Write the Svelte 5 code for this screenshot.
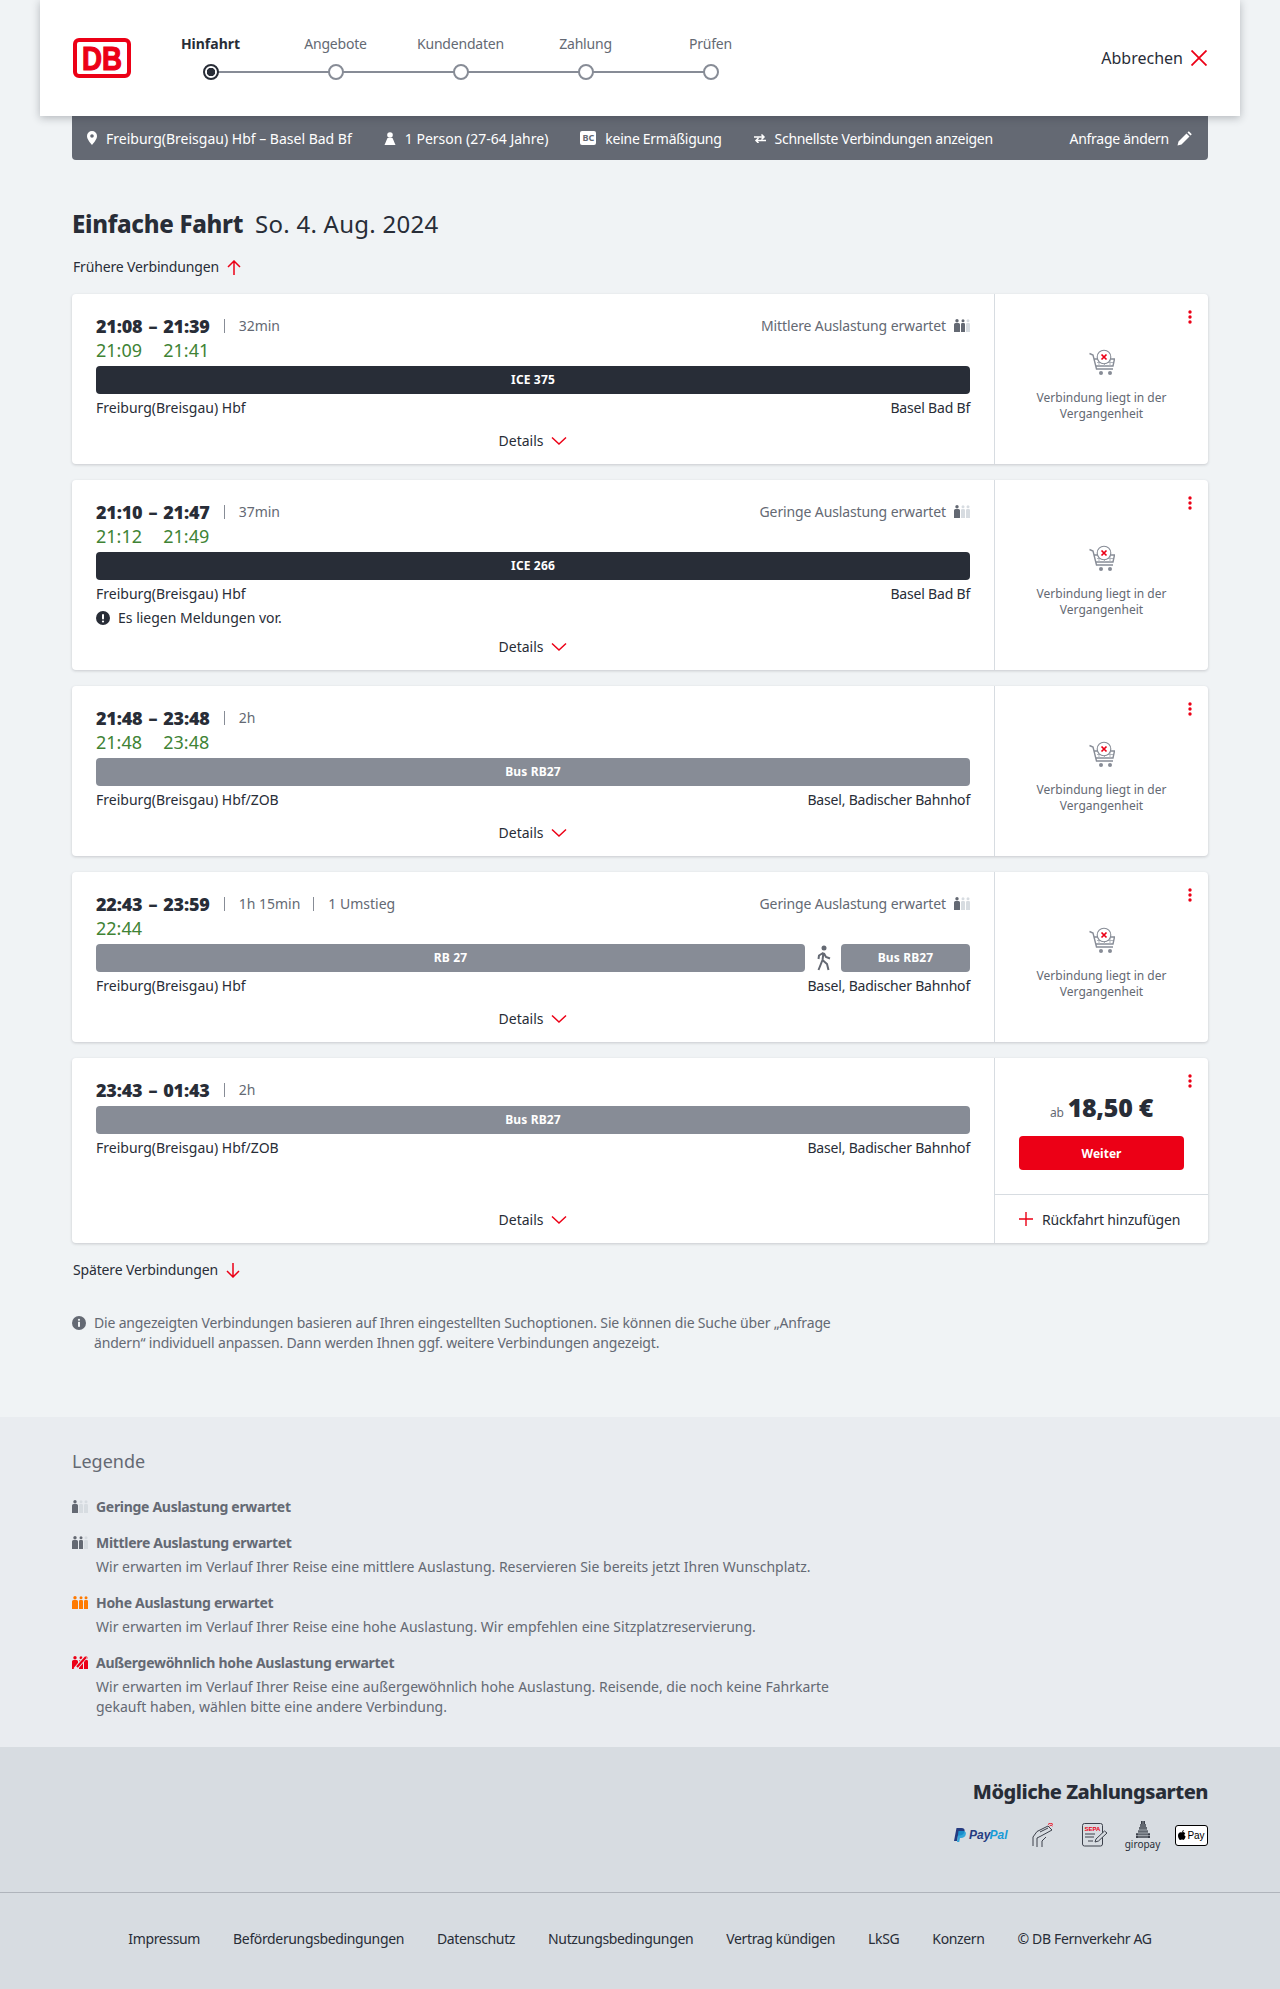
<script>
	let steps = ["Hinfahrt", "Angebote", "Kundendaten", "Zahlung", "Prüfen"];

	let trips = [
		{dep: "21:08", arr: "21:39", depReal: "21:09", arrReal: "21:41", meta: ["32min"], load: "Mittlere Auslastung erwartet", level: 2,
			bars: [{name: "ICE 375", dark: true}], from: "Freiburg(Breisgau) Hbf", to: "Basel Bad Bf"},
		{dep: "21:10", arr: "21:47", depReal: "21:12", arrReal: "21:49", meta: ["37min"], load: "Geringe Auslastung erwartet", level: 1,
			bars: [{name: "ICE 266", dark: true}], from: "Freiburg(Breisgau) Hbf", to: "Basel Bad Bf", notice: "Es liegen Meldungen vor."},
		{dep: "21:48", arr: "23:48", depReal: "21:48", arrReal: "23:48", meta: ["2h"],
			bars: [{name: "Bus RB27"}], from: "Freiburg(Breisgau) Hbf/ZOB", to: "Basel, Badischer Bahnhof"},
		{dep: "22:43", arr: "23:59", depReal: "22:44", meta: ["1h 15min", "1 Umstieg"], load: "Geringe Auslastung erwartet", level: 1,
			bars: [{name: "RB 27", grow: true}, {walk: true}, {name: "Bus RB27"}], from: "Freiburg(Breisgau) Hbf", to: "Basel, Badischer Bahnhof"},
		{dep: "23:43", arr: "01:43", meta: ["2h"],
			bars: [{name: "Bus RB27"}], from: "Freiburg(Breisgau) Hbf/ZOB", to: "Basel, Badischer Bahnhof", price: "18,50 €"},
	];

	let legend = [
		{title: "Geringe Auslastung erwartet", level: 1, text: []},
		{title: "Mittlere Auslastung erwartet", level: 2, text: ["Wir erwarten im Verlauf Ihrer Reise eine mittlere Auslastung. Reservieren Sie bereits jetzt Ihren Wunschplatz."]},
		{title: "Hohe Auslastung erwartet", level: 3, text: ["Wir erwarten im Verlauf Ihrer Reise eine hohe Auslastung. Wir empfehlen eine Sitzplatzreservierung."]},
		{title: "Außergewöhnlich hohe Auslastung erwartet", level: 4, text: ["Wir erwarten im Verlauf Ihrer Reise eine außergewöhnlich hohe Auslastung. Reisende, die noch keine Fahrkarte", "gekauft haben, wählen bitte eine andere Verbindung."]},
	];

	let footerLinks = ["Impressum", "Beförderungsbedingungen", "Datenschutz", "Nutzungsbedingungen", "Vertrag kündigen", "LkSG", "Konzern", "© DB Fernverkehr AG"];
</script>

{#snippet occupancy(level)}
	{@const on = level === 3 ? "#ff7a00" : level === 4 ? "#ec0016" : "#646973"}
	{@const off = "#d7dce1"}
	<svg class="occ" width="16" height="13" viewBox="0 0 16 13">
		<circle cx="3" cy="1.700" r="1.700" fill={on} />
		<path d="M0 5.500a1.500 1.500 0 0 1 1.500-1.500h3A1.500 1.500 0 0 1 6 5.500V12.500a.5.5 0 0 1-.5.5H0z" fill={on} />
		<circle cx="9" cy="1.700" r="1.500" fill={level >= 2 ? on : off} />
		<path d="M7 5.200a1.200 1.200 0 0 1 1.200-1.200h1.600a1.200 1.200 0 0 1 1.200 1.200V13H7z" fill={level >= 2 ? on : off} />
		<circle cx="14" cy="1.700" r="1.500" fill={level >= 3 ? on : off} />
		<path d="M12 5.200a1.200 1.200 0 0 1 1.200-1.200h1.600a1.200 1.200 0 0 1 1.200 1.200V13h-4z" fill={level >= 3 ? on : off} />
		{#if level === 4}
			<path d="M3 13.500 14 0.500" stroke="#e9ecf0" stroke-width="4" />
			<path d="M5 11 14 1" stroke={on} stroke-width="2.200" />
		{/if}
	</svg>
{/snippet}

{#snippet dots()}
	<svg class="dots" width="4" height="14" viewBox="0 0 4 14">
		<circle cx="2" cy="2" r="1.700" /><circle cx="2" cy="7" r="1.700" /><circle cx="2" cy="12" r="1.700" />
	</svg>
{/snippet}

{#snippet chevron()}
	<svg width="16" height="10" viewBox="0 0 16 10" fill="none" stroke="#ec0016" stroke-width="1.500"><path d="M1 1.500 8 8 15 1.500" /></svg>
{/snippet}

<div class="page">
	<header class="top">
		<svg class="logo" width="58" height="40" viewBox="0 0 58 40">
			<rect x="2" y="2" width="54" height="36" rx="4" fill="#fff" stroke="#ec0016" stroke-width="4" />
			<text x="29" y="32" text-anchor="middle" textLength="40" lengthAdjust="spacingAndGlyphs" class="logotext">DB</text>
		</svg>
		<ol class="stepper">
			{#each steps as step, i}
				<li class="step" class:active={i === 0}>
					<span class="steplabel">{step}</span>
					<span class="stepdot"></span>
				</li>
			{/each}
		</ol>
		<button class="cancel">
			Abbrechen
			<svg width="16" height="16" viewBox="0 0 16 16" fill="none" stroke="#ec0016" stroke-width="1.800"><path d="M0.500 0.500 15.500 15.500M15.500 0.500 0.500 15.500" /></svg>
		</button>
	</header>

	<div class="query">
		<span class="qitem qroute">
			<svg width="10" height="14" viewBox="0 0 10 14"><path fill="#fff" fill-rule="evenodd" d="M5 0a5 5 0 0 1 5 5c0 3.200-3 6.500-5 9-2-2.500-5-5.800-5-9a5 5 0 0 1 5-5zm0 3.200a1.800 1.800 0 1 0 0 3.600 1.800 1.800 0 0 0 0-3.600z" /></svg>
			Freiburg(Breisgau) Hbf – Basel Bad Bf
		</span>
		<span class="qitem qperson">
			<svg width="12" height="13" viewBox="0 0 12 13"><circle cx="6" cy="3" r="2.800" fill="#fff" /><path fill="#fff" d="M3.500 6h5l3 7H.5z" /></svg>
			1 Person (27-64 Jahre)
		</span>
		<span class="qitem qcard tight">
			<span class="bc">BC</span>
			keine Ermäßigung
		</span>
		<span class="qitem qfast tight">
			<svg width="12" height="9" viewBox="0 0 12 9" fill="none" stroke="#fff" stroke-width="1.500"><path d="M0 3h10M7.500 0.500 10 3 7.500 5.500M12 6.500H2M4.500 4 2 6.500 4.500 9" /></svg>
			Schnellste Verbindungen anzeigen
		</span>
		<span class="qitem qedit tight">
			Anfrage ändern
			<svg width="15" height="15" viewBox="0 0 15 15"><path fill="#fff" d="M0.500 14.500 1.500 10.500 9.500 2.500 12.500 5.500 4.500 13.500zM10.500 1.500 11.800 0.200 14.800 3.200 13.500 4.500z" /></svg>
		</span>
	</div>

	<main class="content">
		<h1 class="title"><strong>Einfache Fahrt</strong> <span>So. 4. Aug. 2024</span></h1>

		<div class="morelink early">
			Frühere Verbindungen
			<svg width="14" height="15" viewBox="0 0 14 15" fill="none" stroke="#ec0016" stroke-width="1.500"><path d="M7 15V1M1 7 7 1l6 6" /></svg>
		</div>

		<div class="trips">
			{#each trips as trip}
				<article class="card">
					<div class="left">
						<div class="times">
							<span class="t">{trip.dep}</span>
							<span class="t dash">–</span>
							<span class="t">{trip.arr}</span>
							<div class="meta">
								{#each trip.meta as m}
									<i class="pipe"></i><span>{m}</span>
								{/each}
								{#if trip.load}
									<span class="load">{trip.load} {@render occupancy(trip.level)}</span>
								{/if}
							</div>
							{#if trip.depReal}
								<span class="real">{trip.depReal}</span>
								<span></span>
								<span class="real">{trip.arrReal ?? ""}</span>
							{/if}
						</div>
						<div class="bars">
							{#each trip.bars as bar}
								{#if bar.walk}
									<svg class="walk" width="16" height="26" viewBox="0 0 16 26" fill="none" stroke="#646973" stroke-width="2">
										<circle cx="8" cy="3" r="2.500" fill="#646973" stroke="none" />
										<path d="M7.500 7.500 6.500 15M7 8 3 10.500 2.500 14M8 8.500 10 12 14 13.500M6.500 15 2.500 25M6.500 15 11 19 12.500 25" />
									</svg>
								{:else}
									<div class="bar" class:dark={bar.dark} class:grow={bar.grow} class:single={trip.bars.length === 1}>{bar.name}</div>
								{/if}
							{/each}
						</div>
						<div class="stations"><span>{trip.from}</span><span class="to">{trip.to}</span></div>
						{#if trip.notice}
							<div class="notice">
								<svg width="14" height="14" viewBox="0 0 14 14"><circle cx="7" cy="7" r="7" fill="#282d37" /><rect x="6" y="3" width="2" height="5.500" rx="1" fill="#fff" /><circle cx="7" cy="10.500" r="1.100" fill="#fff" /></svg>
								{trip.notice}
							</div>
						{/if}
						<div class="details">Details {@render chevron()}</div>
					</div>
					<div class="right">
						{@render dots()}
						{#if trip.price}
							<div class="buy">
								<div class="price"><small>ab</small> {trip.price}</div>
								<button class="next">Weiter</button>
							</div>
							<div class="return">
								<svg width="14" height="14" viewBox="0 0 14 14" stroke="#ec0016" stroke-width="1.400"><path d="M7 0v14M0 7h14" /></svg>
								Rückfahrt hinzufügen
							</div>
						{:else}
							<div class="past">
								<svg width="26" height="26" viewBox="0 0 26 26" fill="none">
									<path d="M0.500 4.500 4 6 7.500 20H24M5 10H25.500L24 17H6.700" stroke="#878c96" stroke-width="1.400" />
									<path d="M8 13.500H24M10 10v7M15.500 10v7M21 10v7" stroke="#afb4bb" stroke-width="1" />
									<circle cx="15" cy="8" r="6.800" fill="#fff" stroke="#878c96" stroke-width="1.100" />
									<path d="M12.500 5.500 17.500 10.500M17.500 5.500 12.500 10.500" stroke="#ec0016" stroke-width="1.700" />
									<circle cx="12" cy="24" r="2" fill="#878c96" /><circle cx="21" cy="24" r="2" fill="#878c96" />
								</svg>
								<p>Verbindung liegt in der<br />Vergangenheit</p>
							</div>
						{/if}
					</div>
				</article>
			{/each}
		</div>

		<div class="morelink late">
			Spätere Verbindungen
			<svg width="14" height="15" viewBox="0 0 14 15" fill="none" stroke="#ec0016" stroke-width="1.500"><path d="M7 0v14M1 8l6 6 6-6" /></svg>
		</div>

		<div class="info">
			<svg width="14" height="14" viewBox="0 0 14 14"><circle cx="7" cy="7" r="7" fill="#646973" /><circle cx="7" cy="3.800" r="1.100" fill="#f0f3f5" /><rect x="6" y="5.800" width="2" height="5" fill="#f0f3f5" /></svg>
			<p>Die angezeigten Verbindungen basieren auf Ihren eingestellten Suchoptionen. Sie können die Suche über „Anfrage<br />ändern“ individuell anpassen. Dann werden Ihnen ggf. weitere Verbindungen angezeigt.</p>
		</div>
	</main>

	<section class="legend">
		<h2>Legende</h2>
		{#each legend as row}
			<div class="lrow" class:withtext={row.text.length > 0}>
				<div class="lhead">{@render occupancy(row.level)}<strong>{row.title}</strong></div>
				{#each row.text as line}
					<p>{line}</p>
				{/each}
			</div>
		{/each}
	</section>

	<section class="pay">
		<h2>Mögliche Zahlungsarten</h2>
		<div class="logos">
			<svg width="56" height="14" viewBox="0 0 56 14">
				<path fill="#253b80" d="M2.500 0H7.500C10 0 11 1.500 10.500 3.500 10 6 8 7.500 5.500 7.500H4L3 13H0z" />
				<path fill="#179bd7" d="M4.500 3H9C11.500 3 12.200 4.500 11.800 6.300 11.300 8.800 9.500 10 7 10H6L5.200 14H3z" opacity="0.850" />
				<text x="15" y="11" class="pp" fill="#253b80">Pay</text><text x="35.500" y="11" class="pp" fill="#179bd7">Pal</text>
			</svg>
			<svg class="hand" width="22" height="24" viewBox="0 0 22 24" fill="none" stroke="#3c414b" stroke-width="1">
				<path d="M1 23V14L5 8.500 16 3 20 7 9 13M5 24V15L9 13M10 24V18L14 14" />
				<path d="M8 9 16 5" />
				<path d="M16 1.500C17.500 0 19.500 0 21 1.500M17.500 3C18.500 2 19.500 2 20.500 3" stroke="#ec0016" />
			</svg>
			<svg class="sepa" width="26" height="24" viewBox="0 0 26 24" fill="none">
				<rect x="0.500" y="0.500" width="20" height="22.500" rx="2" stroke="#3c414b" />
				<text x="10.500" y="7.500" text-anchor="middle" class="sp" fill="#ec0016">SEPA</text>
				<path d="M3 11H13M3 14H12M6 18H11" stroke="#3c414b" />
				<path d="M13 19 14 16 22.500 8 25 10 16.500 18z" fill="#d7dce1" stroke="#3c414b" />
			</svg>
			<div class="giro">
				<svg width="14" height="17" viewBox="0 0 14 17">
					<path fill="#3c414b" d="M5 0h4v3h1v3h1v3h1v3h2v5H0v-5h2V9h1V6h1V3h1z" />
					<path stroke="#d7dce1" stroke-width="0.500" d="M3 6v11M5 3v14M7 0v17M9 3v14M11 6v11M0 9h14M0 12h14M0 14.500h14" />
				</svg>
				<span>giropay</span>
			</div>
			<div class="apple">
				<svg width="8" height="10" viewBox="0 0 8 10"><path fill="#000" d="M4 2.400C4.600 2.100 5.200 2 5.800 2.200 6.500 2.400 7 2.800 7.300 3.300 6 4.100 6.200 6 7.700 6.600 7.200 8 6.400 10 5.300 10 4.700 10 4.500 9.600 3.800 9.600 3.100 9.600 2.900 10 2.300 10 1.200 10 0 7.600 0 5.700 0 3.600 1.200 2.200 2.600 2.200 3.100 2.200 3.600 2.400 4 2.400zM4 2C4 1 4.800 0.100 5.800 0 5.900 1 5 2 4 2z" /></svg>
				<span>Pay</span>
			</div>
		</div>
	</section>

	<footer class="foot">
		{#each footerLinks as link}
			<span>{link}</span>
		{/each}
	</footer>
</div>

<style>
	:global(body) {
		background: #f0f3f5;
	}
	.page {
		font-family: "Noto Sans", sans-serif;
		font-size: 14px;
		color: #282d37;
		display: flex;
		flex-direction: column;
		height: 1989px;
	}
	.top {
		height: 116px;
		margin: 0 40px;
		background: #fff;
		box-shadow: 0 2px 8px rgba(40, 45, 55, 0.3);
		display: flex;
		align-items: flex-start;
		position: relative;
		z-index: 2;
		box-sizing: border-box;
		padding: 0 33px;
	}
	.logo {
		margin-top: 38px;
		flex: none;
	}
	.logotext {
		font-family: "Liberation Sans", sans-serif;
		font-weight: 700;
		font-size: 34px;
		fill: #ec0016;
		stroke: #ec0016;
		stroke-width: 1.200px;
	}
	.stepper {
		list-style: none;
		margin: 0 0 0 17px;
		padding: 0;
		display: flex;
		width: 625px;
	}
	.step {
		width: 125px;
		display: flex;
		flex-direction: column;
		align-items: center;
		position: relative;
		padding-top: 34px;
		color: #646973;
		letter-spacing: -0.2px;
	}
	.step.active {
		color: #282d37;
		font-weight: 700;
		letter-spacing: 0;
	}
	.steplabel {
		line-height: 20px;
		font-size: 14px;
	}
	.stepdot {
		width: 16px;
		height: 16px;
		box-sizing: border-box;
		border: 2px solid #878c96;
		border-radius: 50%;
		background: #fff;
		margin-top: 10px;
		position: relative;
		z-index: 1;
	}
	.step:not(:last-child)::after {
		content: "";
		position: absolute;
		left: 50%;
		width: 100%;
		top: 71px;
		height: 2px;
		background: #878c96;
	}
	.active .stepdot {
		border-color: #282d37;
		background: radial-gradient(circle, #282d37 0 4px, #fff 4.500px);
	}
	.cancel {
		margin-left: auto;
		margin-top: 48px;
		border: 0;
		background: none;
		padding: 0;
		font: inherit;
		font-size: 16px;
		line-height: 20px;
		color: #282d37;
		display: flex;
		align-items: center;
		gap: 8px;
	}
	.query {
		margin: 0 72px;
		height: 44px;
		background: #646973;
		border-radius: 0 0 4px 4px;
		color: #fff;
		display: flex;
		align-items: center;
		flex: none;
		padding-left: 15px;
		padding-right: 16px;
	}
	.qitem {
		display: flex;
		align-items: center;
		gap: 9px;
		white-space: nowrap;
	}
	.tight {
		letter-spacing: -0.28px;
	}
	.qperson {
		margin-left: 32px;
	}
	.qcard {
		margin-left: 32px;
	}
	.qfast {
		margin-left: 32px;
	}
	.qedit {
		margin-left: auto;
		gap: 8px;
	}
	.bc {
		width: 16px;
		height: 14px;
		background: #fff;
		color: #646973;
		border-radius: 2px;
		font-size: 9px;
		font-weight: 700;
		line-height: 14px;
		text-align: center;
		letter-spacing: 0;
	}
	.content {
		margin: 0 72px;
		flex: none;
		height: 1257px;
	}
	.title {
		margin: 48px 0 0;
		font-size: 24px;
		line-height: 32px;
		font-weight: 400;
		display: flex;
		gap: 12px;
	}
	.title strong {
		font-weight: 800;
		letter-spacing: -0.3px;
	}
	.title span {
		letter-spacing: 0.25px;
	}
	.morelink {
		display: flex;
		align-items: center;
		gap: 8px;
		line-height: 20px;
		margin-left: 1px;
		letter-spacing: -0.15px;
	}
	.early {
		margin-top: 17px;
	}
	.trips {
		display: flex;
		flex-direction: column;
		gap: 16px;
		margin-top: 17px;
	}
	.card {
		background: #fff;
		border-radius: 4px;
		box-shadow: 0 1px 3px rgba(40, 45, 55, 0.2);
		display: flex;
	}
	.left {
		width: 922px;
		box-sizing: border-box;
		padding: 20px 24px 11px;
		display: flex;
		flex-direction: column;
	}
	.times {
		display: grid;
		grid-template-columns: auto auto auto 1fr;
		grid-auto-rows: 24px;
		align-items: center;
	}
	.t {
		font-size: 18px;
		font-weight: 900;
		letter-spacing: -0.2px;
	}
	.dash {
		padding: 0 6px;
	}
	.meta {
		display: flex;
		align-items: center;
		color: #646973;
		font-size: 14px;
		margin-top: -1px;
	}
	.pipe {
		width: 1px;
		height: 14px;
		background: #878c96;
		margin: 0 14px;
	}
	.pipe:not(:first-child) {
		margin-left: 13px;
	}
	.load {
		margin-left: auto;
		display: flex;
		align-items: center;
		gap: 8px;
		letter-spacing: -0.12px;
	}
	.occ {
		flex: none;
	}
	.real {
		color: #408335;
		font-size: 18px;
	}
	.bars {
		display: flex;
		margin-top: 4px;
		height: 28px;
	}
	.bar {
		background: #878c96;
		color: #fff;
		border-radius: 4px;
		font-size: 12px;
		font-weight: 700;
		line-height: 28px;
		text-align: center;
		width: 129px;
		letter-spacing: 0.15px;
	}
	.bar.single {
		width: 100%;
	}
	.bar.grow {
		flex: 1;
	}
	.bar.dark {
		background: #282d37;
	}
	.walk {
		margin: 1px 9px 0 11px;
		flex: none;
	}
	.stations {
		display: flex;
		justify-content: space-between;
		line-height: 24px;
		margin-top: 2px;
	}
	.to {
		letter-spacing: -0.2px;
	}
	.notice {
		display: flex;
		align-items: center;
		gap: 8px;
		margin-top: 3px;
		line-height: 17px;
	}
	.details {
		margin-top: auto;
		padding-top: 9px;
		display: flex;
		justify-content: center;
		align-items: center;
		gap: 8px;
		line-height: 24px;
	}
	.right {
		width: 214px;
		border-left: 1px solid #d7dce1;
		box-sizing: border-box;
		position: relative;
		display: flex;
		flex-direction: column;
	}
	.dots {
		position: absolute;
		top: 16px;
		right: 16px;
		fill: #ec0016;
	}
	.past {
		flex: 1;
		display: flex;
		flex-direction: column;
		align-items: center;
		justify-content: center;
		padding-top: 12px;
		color: #646973;
	}
	.past p {
		margin: 15px 0 0;
		font-size: 12px;
		line-height: 16px;
		text-align: center;
	}
	.buy {
		padding: 33px 24px 24px;
		text-align: center;
	}
	.price {
		font-size: 25px;
		font-weight: 900;
		line-height: 32px;
		margin-bottom: 13px;
		letter-spacing: -0.3px;
	}
	.price small {
		font-size: 12px;
		font-weight: 400;
		color: #646973;
		line-height: 1;
		margin-right: -2px;
	}
	.next {
		display: block;
		width: 100%;
		height: 34px;
		background: #ec0016;
		color: #fff;
		border: 0;
		border-radius: 4px;
		font: inherit;
		font-size: 12px;
		font-weight: 700;
		padding: 0;
	}
	.return {
		height: 49px;
		box-sizing: border-box;
		border-top: 1px solid #d7dce1;
		display: flex;
		align-items: center;
		padding-left: 24px;
		gap: 9px;
		letter-spacing: -0.2px;
	}
	.late {
		margin-top: 17px;
	}
	.info {
		display: flex;
		gap: 8px;
		margin-top: 33px;
		color: #646973;
		letter-spacing: -0.17px;
	}
	.info svg {
		margin-top: 3px;
		flex: none;
	}
	.info p {
		margin: 0;
		line-height: 20px;
	}
	.legend {
		background: #e9ecf0;
		height: 330px;
		flex: none;
		box-sizing: border-box;
		padding: 31px 72px 0;
		color: #646973;
	}
	.legend h2 {
		margin: 0 0 20px;
		font-size: 18px;
		font-weight: 400;
		line-height: 26px;
	}
	.lrow {
		margin-bottom: 11px;
	}
	.lrow.withtext {
		margin-bottom: 13px;
	}
	.lrow strong {
		letter-spacing: -0.3px;
	}
	.lrow p {
		margin: 0 0 0 24px;
		line-height: 20px;
	}
	.lhead + p {
		margin-top: 2px;
	}
	.lhead {
		display: flex;
		align-items: center;
		gap: 8px;
		line-height: 24px;
		height: 25px;
	}
	.pay {
		background: #d7dce1;
		height: 146px;
		flex: none;
		box-sizing: border-box;
		padding: 30px 72px 0;
		border-bottom: 1px solid #afb4bb;
	}
	.pay h2 {
		margin: 0;
		font-size: 20px;
		font-weight: 800;
		line-height: 30px;
		text-align: right;
		letter-spacing: -0.5px;
	}
	.logos {
		display: flex;
		justify-content: flex-end;
		align-items: center;
		margin-top: 13px;
		height: 30px;
	}
	.pp {
		font-family: "Liberation Sans", sans-serif;
		font-size: 12px;
		font-weight: 700;
		font-style: italic;
	}
	.sp {
		font-family: "Liberation Sans", sans-serif;
		font-size: 6px;
		font-weight: 700;
	}
	.hand {
		margin-left: 22px;
	}
	.sepa {
		margin-left: 28px;
	}
	.giro {
		margin-left: 17px;
		width: 35px;
		display: flex;
		flex-direction: column;
		align-items: center;
		font-size: 10px;
		line-height: 12px;
	}
	.apple {
		margin-left: 15px;
		width: 33px;
		height: 21px;
		box-sizing: border-box;
		border: 1px solid #000;
		border-radius: 3px;
		background: #fff;
		display: flex;
		align-items: center;
		justify-content: center;
		gap: 1px;
		font-family: "Liberation Sans", sans-serif;
		font-size: 10px;
		color: #000;
	}
	.foot {
		flex: 1;
		background: #d7dce1;
		display: flex;
		justify-content: center;
		align-items: center;
		gap: 33px;
		padding-bottom: 6px;
		letter-spacing: -0.36px;
	}
</style>
